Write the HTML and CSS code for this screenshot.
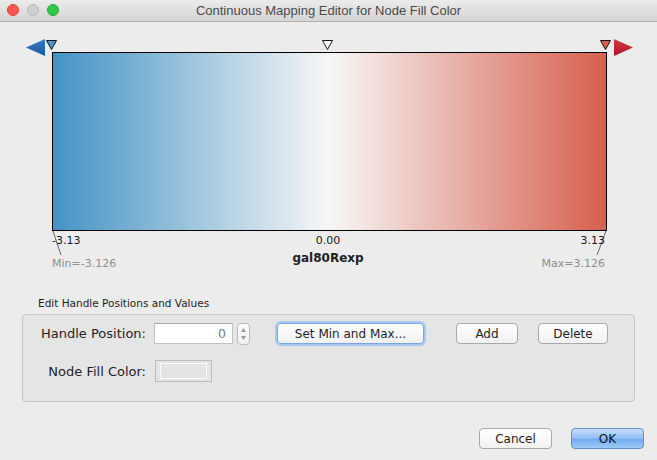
FILE: index.html
```html
<!DOCTYPE html>
<html>
<head>
<meta charset="utf-8">
<link rel="stylesheet" href="styles.css">
</head>
<body>
<div class="window">
  <div class="titlebar">
    <div class="lights">
      <span class="light red"></span>
      <span class="light grey"></span>
      <span class="light green"></span>
    </div>
    <div class="title">Continuous Mapping Editor for Node Fill Color</div>
  </div>

  <div class="editor">
    <svg class="arrow arrow-left" width="20" height="17" viewBox="0 0 20 17">
      <defs>
        <linearGradient id="gl" x1="0" y1="0" x2="0" y2="1">
          <stop offset="0" stop-color="#3a7cc4"/>
          <stop offset="1" stop-color="#1c58a3"/>
        </linearGradient>
      </defs>
      <polygon points="0,8.5 19,0 19,17" fill="url(#gl)"/>
    </svg>
    <svg class="handle handle-left" width="11" height="10" viewBox="0 0 11 10">
      <polygon points="0.5,0.5 10.5,0.5 5.5,9.5" fill="#4a96c8" stroke="#111" stroke-width="1"/>
    </svg>
    <svg class="handle handle-mid" width="11" height="10" viewBox="0 0 11 10">
      <polygon points="0.5,0.5 10.5,0.5 5.5,9.5" fill="#fff" stroke="#111" stroke-width="1"/>
    </svg>
    <svg class="handle handle-right" width="11" height="10" viewBox="0 0 11 10">
      <polygon points="0.5,0.5 10.5,0.5 5.5,9.5" fill="#d8604c" stroke="#111" stroke-width="1"/>
    </svg>
    <svg class="arrow arrow-right" width="20" height="17" viewBox="0 0 20 17">
      <defs>
        <linearGradient id="gr" x1="0" y1="0" x2="0" y2="1">
          <stop offset="0" stop-color="#d23a45"/>
          <stop offset="1" stop-color="#b01325"/>
        </linearGradient>
      </defs>
      <polygon points="1,0 20,8.5 1,17" fill="url(#gr)"/>
    </svg>

    <div class="gradient"></div>

    <svg class="ticks" width="657" height="268" viewBox="0 0 657 268">
      <line x1="53" y1="209" x2="61" y2="233" stroke="#666" stroke-width="1"/>
      <line x1="606" y1="209" x2="597" y2="233" stroke="#666" stroke-width="1"/>
    </svg>

    <div class="val val-left">-3.13</div>
    <div class="val val-mid">0.00</div>
    <div class="val val-right">3.13</div>
    <div class="attr">gal80Rexp</div>
    <div class="range range-min">Min=-3.126</div>
    <div class="range range-max">Max=3.126</div>
  </div>

  <div class="section-label">Edit Handle Positions and Values</div>
  <div class="panel">
    <div class="row">
      <label class="field-label">Handle Position:</label>
      <div class="input">0</div>
      <div class="spinner">
        <svg width="13" height="22" viewBox="0 0 13 22">
          <polygon points="6.5,5 4,9 9,9" fill="#9a9a9a"/>
          <polygon points="6.5,17 4,13 9,13" fill="#9a9a9a"/>
        </svg>
      </div>
      <button class="btn btn-focus btn-setmin">Set Min and Max...</button>
      <button class="btn btn-add">Add</button>
      <button class="btn btn-delete">Delete</button>
    </div>
    <div class="row row2">
      <label class="field-label">Node Fill Color:</label>
      <div class="color-btn"><div class="color-inner"></div></div>
    </div>
  </div>

  <div class="footer">
    <button class="btn btn-cancel">Cancel</button>
    <button class="btn btn-ok">OK</button>
  </div>
</div>
</body>
</html>
```

FILE: styles.css
```css
* { box-sizing: border-box; }
html, body {
  margin: 0;
  padding: 0;
  width: 657px;
  height: 460px;
  overflow: hidden;
  background: #ececec;
  font-family: "Liberation Sans", Arial, sans-serif;
}
.window {
  width: 657px;
  height: 460px;
  background: #ececec;
  display: flex;
  flex-direction: column;
}
.titlebar {
  position: relative;
  height: 22px;
  flex: none;
  background: linear-gradient(#ebebeb, #d5d5d5);
  border-bottom: 1px solid #b2b2b2;
  display: flex;
  align-items: center;
  justify-content: center;
}
.lights {
  position: absolute;
  left: 7px;
  top: 4px;
  display: flex;
  gap: 8px;
}
.light {
  width: 12px;
  height: 12px;
  border-radius: 50%;
  display: block;
}
.red { background: #fc5753; border: 1px solid #df3e3a; }
.grey { background: #cfcfcf; border: 1px solid #b8b8b8; }
.green { background: #33c748; border: 1px solid #27a83a; }
.title {
  font-size: 13px;
  color: #4a4a4a;
  line-height: 16px;
}

.editor {
  position: relative;
  height: 268px;
  flex: none;
}
.gradient {
  margin: 30px 0 0 52px;
  width: 555px;
  height: 179px;
  border: 1px solid #000;
  background: linear-gradient(to right, #4393c3 0%, #f7f7f7 50%, #d6604d 100%);
}
.arrow, .handle, .ticks { position: absolute; }
.arrow-left { left: 26px; top: 17px; }
.arrow-right { left: 613px; top: 17px; }
.handle { top: 18px; }
.handle-left { left: 46px; }
.handle-mid { left: 322px; }
.handle-right { left: 600px; }
.ticks { left: 0; top: 0; }

.val, .range, .attr {
  position: absolute;
  font-family: "DejaVu Sans", sans-serif;
  font-size: 11px;
  line-height: 13px;
  white-space: nowrap;
}
.val { color: #1a1a1a; top: 212px; }
.val-left { left: 52px; }
.val-mid { left: 304px; width: 48px; text-align: center; }
.val-right { right: 52px; }
.range { color: #8f8f8f; top: 235px; }
.range-min { left: 52px; }
.range-max { right: 52px; }
.attr {
  top: 229px;
  left: 278px;
  width: 100px;
  text-align: center;
  font-weight: bold;
  font-size: 12px;
  line-height: 14px;
  color: #222;
}

.section-label {
  margin: 6px 0 0 38px;
  font-family: "DejaVu Sans", sans-serif;
  font-size: 10.5px;
  line-height: 14px;
  color: #1e1e1e;
}
.panel {
  margin: 4px 0 0 22px;
  width: 613px;
  height: 88px;
  border: 1px solid #c6c6c6;
  border-radius: 4px;
  background: #e5e5e5;
  padding: 8px 0 0 17px;
}
.row {
  display: flex;
  align-items: center;
  height: 21px;
}
.row2 { margin-top: 16px; height: 22px; }
.field-label {
  width: 106px;
  text-align: right;
  font-family: "DejaVu Sans", sans-serif;
  font-size: 13px;
  color: #1e1e1e;
  white-space: nowrap;
}
.input {
  margin-left: 8px;
  width: 79px;
  height: 21px;
  background: #fff;
  border: 1px solid #c2c2c2;
  border-top-color: #a9a9a9;
  font-family: "DejaVu Sans", sans-serif;
  font-size: 12.5px;
  line-height: 19px;
  text-align: right;
  padding-right: 6px;
  color: #7a7a7a;
}
.spinner {
  margin-left: 4px;
  width: 13px;
  height: 22px;
  border: 1px solid #b9b9b9;
  border-radius: 4px;
  background: linear-gradient(#fdfdfd, #efefef);
  display: flex;
  align-items: center;
  justify-content: center;
  overflow: hidden;
}
.spinner svg { display: block; flex: none; }
.btn {
  height: 21px;
  border: 1px solid #a9a9a9;
  border-radius: 4px;
  background: linear-gradient(#ffffff, #f1f1f1);
  font-family: "DejaVu Sans", sans-serif;
  font-size: 12px;
  color: #1e1e1e;
  padding: 0;
  line-height: 20px;
  text-align: center;
  white-space: nowrap;
}
.btn-focus {
  border-color: #7aa7e0;
  box-shadow: 0 0 0 2px #a6c8f2;
}
.btn-setmin { margin-left: 27px; width: 147px; }
.btn-add { margin-left: 32px; width: 62px; }
.btn-delete { margin-left: 20px; width: 70px; }
.color-btn {
  margin-left: 9px;
  width: 57px;
  height: 22px;
  border: 1px solid #bcbcbc;
  background: #e4e4e4;
  padding: 2px 4px;
}
.color-inner {
  width: 100%;
  height: 100%;
  border: 1px solid #fafafa;
}
.footer {
  margin-top: 26px;
  display: flex;
  justify-content: flex-end;
  padding-right: 13px;
  gap: 19px;
}
.btn-cancel { width: 73px; }
.btn-ok {
  width: 73px;
  border-color: #5f8ed6;
  background: linear-gradient(#c9e0fb, #8cbcf4 50%, #6ea8ef 51%, #9ccbf8);
  color: #111;
}
```
